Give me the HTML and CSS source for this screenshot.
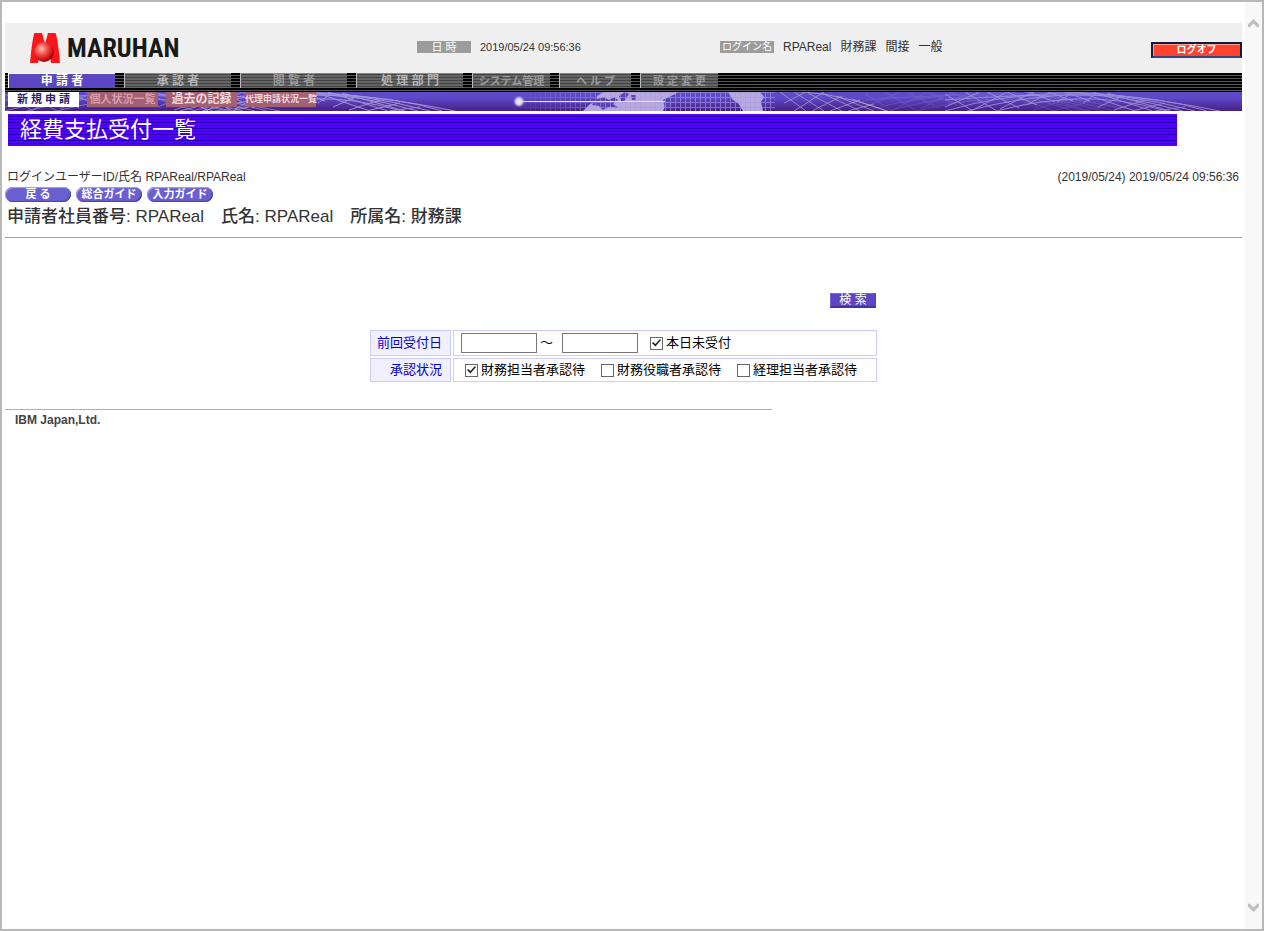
FILE: index.html
```html
<!DOCTYPE html>
<html lang="ja">
<head>
<meta charset="utf-8">
<title>経費支払受付一覧</title>
<link rel="stylesheet" href="styles.css">
</head>
<body>
<div class="frame">
  <main class="page">
    <header class="header">
      <div class="logo">
        <svg class="logo-mark" viewBox="0 0 30 32" aria-hidden="true">
          <defs><radialGradient id="ball" cx="0.38" cy="0.34" r="0.65"><stop offset="0" stop-color="#ffc4b4"/><stop offset="0.4" stop-color="#f4594e"/><stop offset="0.8" stop-color="#d5141b"/><stop offset="1" stop-color="#94090b"/></radialGradient></defs>
          <path fill="#fc151b" d="M0 31 C1 20 2 10 4 2 Q4 1 5 1 H12 L15 12 L18 1 H25 Q26 1 26 2 C28 10 29 20 30 31 H21 L20 24 H9 L8 31Z"/>
          <circle cx="14" cy="20" r="10" fill="url(#ball)"/>
        </svg>
        <span class="logo-text">MARUHAN</span>
      </div>
      <div class="info"><span class="tag">日 時</span><span class="date">2019/05/24 09:56:36</span></div>
      <div class="info"><span class="tag name-tag">ログイン名</span><span class="user"><span>RPAReal</span><span>財務課</span><span>間接</span><span>一般</span></span></div>
      <button class="logoff" type="button">ログオフ</button>
    </header>
    <nav class="tabs">
      <a class="tab active" href="#">申 請 者</a>
      <a class="tab bright" href="#">承 認 者</a>
      <a class="tab" href="#">閲 覧 者</a>
      <a class="tab bright" href="#">処 理 部 門</a>
      <a class="tab small" href="#">システム管理</a>
      <a class="tab small short" href="#">ヘ ル プ</a>
      <a class="tab small" href="#">設 定 変 更</a>
    </nav>
    <div class="subnav">
      <svg class="banner" viewBox="0 0 1237 19" preserveAspectRatio="none" aria-hidden="true">
        <defs>
          <pattern id="grid" width="5" height="5" patternUnits="userSpaceOnUse"><path d="M0 .5H5M.5 0V5" stroke="#a99be0" stroke-width="1" opacity=".6"/></pattern>
          <linearGradient id="fade"><stop offset="0" stop-color="#fff" stop-opacity="0"/><stop offset=".4" stop-color="#fff"/></linearGradient>
          <mask id="grid-mask"><rect x="505" width="265" height="19" fill="url(#fade)"/></mask>
          <radialGradient id="glow"><stop offset="0" stop-color="#eee"/><stop offset=".5" stop-color="#ddd6ee"/><stop offset="1" stop-color="#bbaeea" stop-opacity="0"/></radialGradient>
          <g id="mesh" fill="none" stroke="#b4a6dc" stroke-width="1">
            <path d="M0 19 Q55 3 115 1 T250 19M22 19 Q70 6 120 3 T238 19M52 19 Q88 9 130 7 T222 19M80 0 Q165 -3 275 19M0 8 Q75 2 145 3 T262 19"/>
            <path d="M0 2 28 19M20 0 52 19M42 0 74 16M62 0 92 13M84 0 110 10M103 0 128 9M120 0 145 9M134 0 190 19M148 0 208 19M162 1 225 19M0 15 35 0M26 19 62 0M55 17 88 0M83 12 106 0M112 10 129 0M138 11 152 1M153 15 178 4M169 18 200 8M187 19 220 11M209 19 240 15"/>
          </g>
          <g id="net" fill="none" stroke="#b4a6c8" stroke-width="1">
            <path d="M0 0 26 19M14 0 44 19M28 1 62 19M42 1 80 19M56 4 94 19M72 7 106 19M14 19 44 0M4 11 26 0M32 19 62 4M50 19 80 8M68 19 94 12M0 0 Q45 -3 108 19"/>
          </g>
        </defs>
        <use href="#mesh" x="0" opacity=".6"/>
        <use href="#mesh" x="175" opacity=".8"/>
        <path fill="#b7a8df" d="M578 19 585 12 592 10 592 4 599 0H672L668 8 661 12 658 19ZM723 0H755L759 5 756 10 758 19H738L733 11 728 8Z"/>
        <path fill="#5a43b7" d="M592 7 599 5 604 8 609 5 613 8 608 12 614 16 604 15 598 18 594 14 587 13ZM614 4 620 0 624 2 620 8 617 11ZM626 3H631V8H627ZM658 8 670 2 673 5 666 14 660 17Z"/>
        <rect x="505" width="265" height="19" fill="url(#grid)" mask="url(#grid-mask)"/>
        <path stroke="#f3e6c5" d="M514 9.500H660"/>
        <circle cx="514" cy="9.500" r="6" fill="url(#glow)"/>
        <use href="#net" x="775" opacity=".7"/>
        <use href="#mesh" x="860" opacity=".2"/>
        <use href="#mesh" x="940" opacity=".7"/>
      </svg>
      <div class="sublinks">
        <a class="sublink current" href="#">新 規 申 請</a>
        <a class="sublink" href="#">個人状況一覧</a>
        <a class="sublink light" href="#">過去の記録</a>
        <a class="sublink light tiny" href="#">代理申請状況一覧</a>
      </div>
    </div>
    <h1 class="title">経費支払受付一覧</h1>
    <div class="status"><span>ログインユーザーID/氏名 RPAReal/RPAReal</span><span>(2019/05/24) 2019/05/24 09:56:36</span></div>
    <div class="actions">
      <button class="pill" type="button">戻 る</button>
      <button class="pill" type="button">総合ガイド</button>
      <button class="pill" type="button">入力ガイド</button>
    </div>
    <h2 class="applicant"><span>申請者社員番号: RPAReal</span><span>氏名: RPAReal</span><span>所属名: 財務課</span></h2>
    <form class="search">
      <button class="search-button" type="button">検 索</button>
      <table class="filters">
        <tr>
          <th scope="row">前回受付日</th>
          <td><div class="fields dates"><input class="day" type="text" aria-label="前回受付日（開始）"><span class="tilde">～</span><input class="day" type="text" aria-label="前回受付日（終了）"><label class="check"><input type="checkbox" checked>本日未受付</label></div></td>
        </tr>
        <tr>
          <th scope="row">承認状況</th>
          <td><div class="fields states"><label class="check"><input type="checkbox" checked>財務担当者承認待</label><label class="check"><input type="checkbox">財務役職者承認待</label><label class="check"><input type="checkbox">経理担当者承認待</label></div></td>
        </tr>
      </table>
    </form>
    <footer class="footer">IBM Japan,Ltd.</footer>
  </main>
  <div class="scrollbar" aria-hidden="true">
    <svg class="arrow" viewBox="0 0 11 9"><path d="M0 8V5.500L5.500 0 11 5.500V8L9.500 8.500 5.500 4.500 1.500 8.500Z" fill="#bfbfbf"/></svg>
    <svg class="arrow" viewBox="0 0 11 9"><path d="M0 1V3.500L5.500 9 11 3.500V1L9.500 .5 5.500 4.500 1.500 .5Z" fill="#bfbfbf"/></svg>
  </div>
</div>
</body>
</html>
```
FILE: styles.css
```css
* { box-sizing: border-box; }
body {
  margin: 0;
  background: #fff;
  color: #333;
  font: 12px/16px "Liberation Sans", "Noto Sans CJK JP", sans-serif;
}
button, input { font: inherit; margin: 0; padding: 0; }
a { text-decoration: none; }
.frame {
  display: flex;
  min-height: 100vh;
  border: 2px solid #b8b8b8;
}
.page { flex: 1; min-width: 0; padding: 21px 3px 0; }
.scrollbar {
  display: flex;
  flex-direction: column;
  justify-content: space-between;
  align-items: center;
  width: 17px;
  padding: 17px 0;
  background: #f8f8f8;
}
.arrow { width: 11px; height: 9px; }

.header {
  display: grid;
  grid-template-columns: 33.3% 24.5% 1fr auto;
  height: 50px;
  background: #efefef;
}
.logo { display: flex; align-items: center; gap: 7px; padding-left: 25px; }
.logo-mark { width: 30px; height: 32px; }
.logo-text {
  color: #191919;
  font: bold 26px/32px "Roboto Condensed", "Liberation Sans Narrow", "DejaVu Sans Condensed", sans-serif;
}
.info { display: flex; align-items: center; gap: 9px; height: 48px; }
.tag {
  width: 54px;
  background: #9c9c9c;
  color: #fff;
  line-height: 12px;
  font-size: 11px;
  text-align: center;
  white-space: nowrap;
}
.name-tag { font-size: 10px; }
.date { font-size: 11px; }
.user { display: flex; gap: 9px; }
.logoff {
  align-self: center;
  width: 91px;
  height: 16px;
  margin-top: 4px;
  border: 2px solid #101b3c;
  border-bottom-color: #34477e;
  background: #ff432e;
  box-shadow: inset 1px 1px #ff9c8c;
  color: #fff;
  font-size: 10px;
  font-weight: bold;
  line-height: 12px;
}

.tabs {
  display: flex;
  gap: 9px;
  height: 19px;
  padding-left: 3px;
  background: repeating-linear-gradient(#000 0 2px, #555 2px 3px);
}
.tab {
  width: 107px;
  height: 15px;
  border-left: 1px solid #bbb;
  border-top: 1px solid #888;
  background: repeating-linear-gradient(#444 0 1px, #646464 1px 3px);
  color: #9a9a9a;
  font-size: 12px;
  font-weight: bold;
  line-height: 14px;
  text-align: center;
  white-space: nowrap;
}
.tab.bright { color: #b4b4b4; }
.tab.small { width: 78px; font-size: 11px; }
.tab.short { width: 72px; }
.tab.active { border-color: #fff; background: #5d46c4; color: #fff; }

.subnav {
  display: grid;
  height: 19px;
  background: linear-gradient(#5d49c9 30%, #452084);
}
.banner, .sublinks { grid-area: 1 / 1; }
.banner { width: 100%; height: 19px; }
.sublinks { display: flex; gap: 8px; padding-left: 3px; z-index: 1; }
.sublink {
  width: 71px;
  height: 15px;
  background: #a35f74;
  color: #d69daa;
  font-size: 11px;
  font-weight: bold;
  line-height: 15px;
  text-align: center;
  white-space: nowrap;
}
.sublink.light { color: #f0d9dd; font-size: 12px; }
.sublink.tiny { font-size: 9px; }
.sublink.current { background: #fff; color: #2c1e70; }

.title {
  margin: 3px 65px 0 3px;
  padding-left: 12px;
  background: repeating-linear-gradient(#50f 0 2px, #2300b0 2px 3px);
  color: #fff;
  font-size: 22px;
  font-weight: normal;
  line-height: 32px;
}
.status {
  display: flex;
  justify-content: space-between;
  padding: 23px 3px 0 2px;
}
.actions { display: flex; gap: 5px; padding-top: 2px; }
.pill {
  width: 66px;
  height: 15px;
  border: 0;
  border-radius: 8px;
  background: #6a5fd0;
  box-shadow: inset 1px 1px 1px #aaa4e8, inset -1px -1px 1px #4a44a4;
  color: #fff;
  font-size: 11px;
  font-weight: bold;
  line-height: 15px;
}
.applicant {
  display: flex;
  gap: 17px;
  margin: 0;
  padding: 5px 0 10px 2px;
  border-bottom: 1px solid #a0a0a0;
  font-size: 17px;
  font-weight: 500;
  line-height: 20px;
}

.search { width: 507px; max-width: 100%; margin: 55px auto 0; }
.search-button {
  display: block;
  width: 46px;
  height: 15px;
  margin: 0 1px 20px auto;
  border: 1px solid #7464d2;
  border-right-color: #2458c0;
  border-bottom: 2px solid #45329c;
  background: #5d46c4;
  color: #fff;
  font-size: 12px;
  line-height: 12px;
}
.filters {
  width: 511px;
  margin: 0 -2px;
  border-spacing: 2px;
  color: #000;
  font-size: 13px;
  line-height: 20px;
}
.filters th, .filters td { border: 1px solid #ccf; padding: 0; }
.filters th {
  width: 81px;
  padding-right: 8px;
  background: #f0f0ff;
  color: #00c;
  font-weight: normal;
  text-align: right;
}
.fields { display: flex; align-items: center; padding-left: 7px; }
.dates { height: 24px; }
.states { height: 22px; gap: 16px; padding-left: 11px; }
.day { width: 76px; height: 20px; border: 1px solid #767676; background: #fff; }
.tilde { width: 25px; padding-left: 3px; }
.check { display: flex; align-items: center; gap: 3px; }
.dates .check { margin-left: 12px; }
.check input {
  display: grid;
  place-items: center;
  appearance: none;
  width: 13px;
  height: 13px;
  border: 1px solid #666;
  background: #fff;
}
.check input:checked::before {
  content: "";
  width: 9px;
  height: 9px;
  background: #222;
  clip-path: polygon(0 50%, 12% 38%, 38% 62%, 88% 5%, 100% 17%, 38% 90%);
}
.footer {
  width: 62%;
  margin-top: 25px;
  padding: 2px 10px;
  border-top: 1px solid #b0b0b0;
  color: #444;
  font-size: 12px;
  font-weight: bold;
}
```
